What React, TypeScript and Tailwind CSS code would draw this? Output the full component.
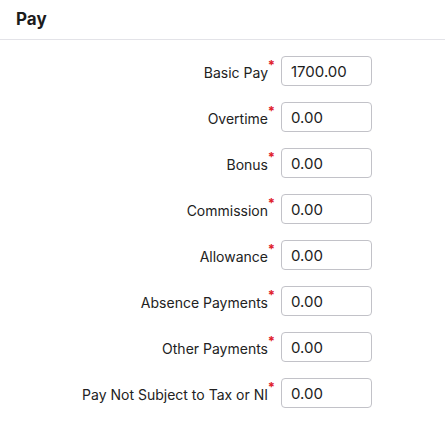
const fields: [string, string][] = [
  ["Basic Pay", "1700.00"],
  ["Overtime", "0.00"],
  ["Bonus", "0.00"],
  ["Commission", "0.00"],
  ["Allowance", "0.00"],
  ["Absence Payments", "0.00"],
  ["Other Payments", "0.00"],
  ["Pay Not Subject to Tax or NI", "0.00"],
];

export default function App() {
  return (
    <div className="min-h-[427px] w-[445px] bg-white font-['Inter',sans-serif] text-[#222]">
      <div className="flex h-10 items-center border-b border-[#e3e3e8] px-4">
        <h2 className="text-[17px] font-bold text-[#1c1c1c]">Pay</h2>
      </div>
      <div className="flex flex-col gap-4 pt-4">
        {fields.map(([label, value]) => (
          <div key={label} className="flex items-center">
            <div className="flex w-[281px] justify-end pr-[13px]">
              <span className="relative top-[1px] text-[14px]">
                {label}
                <span className="absolute -right-[7px] -top-[6px] text-[13px] font-bold text-[#e0202a]">*</span>
              </span>
            </div>
            <input
              readOnly
              value={value}
              className="h-[30px] w-[91px] rounded-[4px] border border-[#c2c2c8] px-[9px] text-[15px] text-[#1c1c1c] outline-none"
            />
          </div>
        ))}
      </div>
    </div>
  );
}
